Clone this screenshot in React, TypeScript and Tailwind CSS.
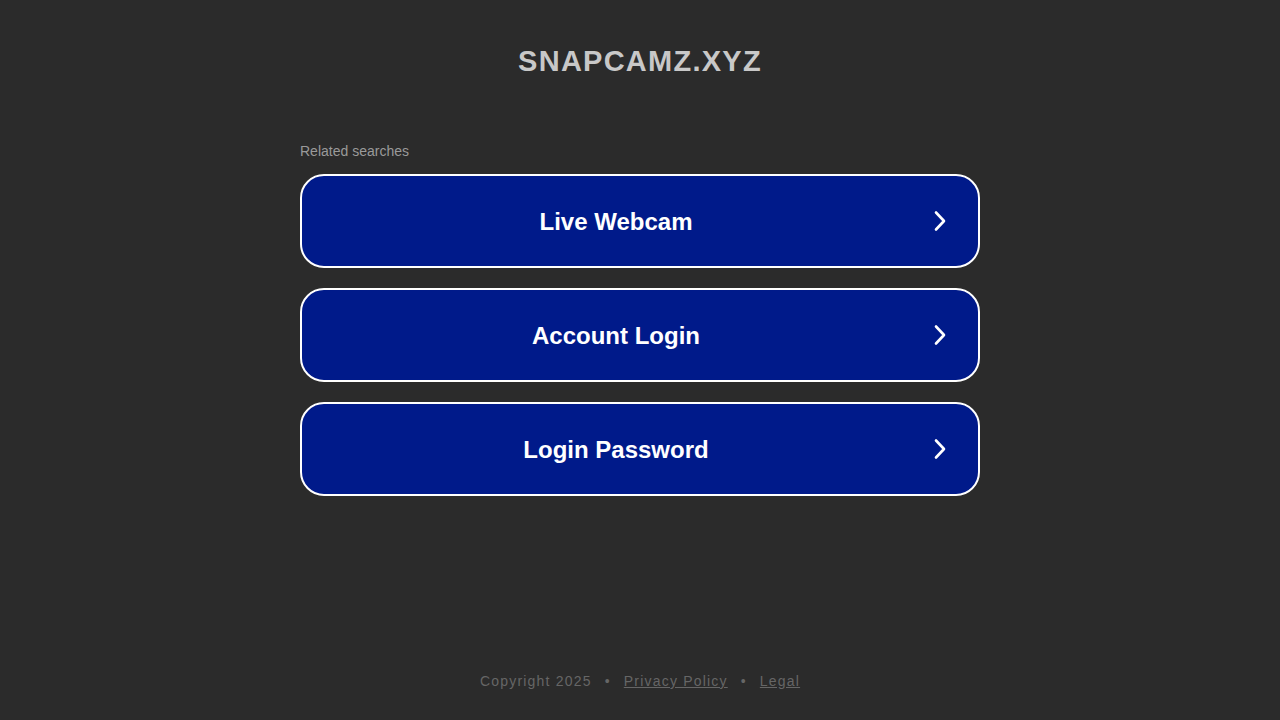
const searches = ['Live Webcam', 'Account Login', 'Login Password']

const Chevron = () => (
	<svg width="16" height="24" viewBox="0 0 16 24" fill="none" className="shrink-0">
		<path
			d="M4 3.5 12 12l-8 8.5"
			stroke="white"
			strokeWidth="2.6"
			strokeLinecap="round"
			strokeLinejoin="round"
		/>
	</svg>
)

export default function App() {
	return (
		<div className="min-h-[720px] bg-[#2b2b2b] flex flex-col items-center font-['Liberation_Sans',Arial,sans-serif]">
			<h1 className="mt-[42px] text-[29px] leading-[38px] font-bold tracking-[1.25px] text-[#c8c8c8]">
				SNAPCAMZ.XYZ
			</h1>

			<div className="mt-[61px] w-[680px]">
				<p className="text-[14px] leading-[20px] text-[#9a9a9a]">Related searches</p>
				<div className="mt-[13px] flex flex-col gap-[20px]">
					{searches.map((s) => (
						<a
							key={s}
							href="#"
							className="flex items-center h-[94px] rounded-[24px] border-2 border-white bg-[#001a8a] px-[30px]"
						>
							<span className="flex-1 text-center text-[24px] leading-[30px] font-bold text-white pr-[32px] pt-[2px]">
								{s}
							</span>
							<Chevron />
						</a>
					))}
				</div>
			</div>

			<footer className="mt-auto mb-[29px] text-[14px] leading-[20px] tracking-[1.2px] text-[#666666] flex items-center gap-[13px]">
				<span>Copyright 2025</span>
				<span>•</span>
				<a href="#" className="underline">Privacy Policy</a>
				<span>•</span>
				<a href="#" className="underline">Legal</a>
			</footer>
		</div>
	)
}
